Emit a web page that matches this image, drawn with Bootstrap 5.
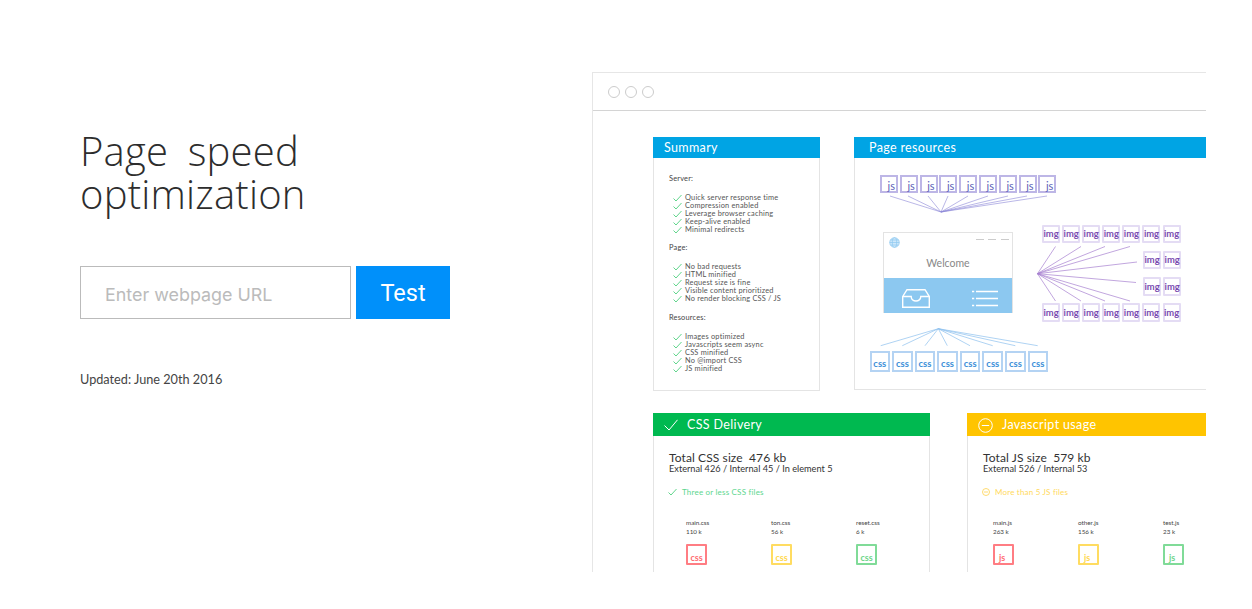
<!DOCTYPE html>
<html lang="en">
<head>
  <meta charset="UTF-8" />
  <title>Page speed optimization</title>
  <meta name="viewport" content="width=device-width, initial-scale=1" />
  <link href="https://cdn.jsdelivr.net/npm/bootstrap@5.3.3/dist/css/bootstrap.min.css" rel="stylesheet" />
  <style>
    body { background: #fff; font-family: Lato, "Open Sans", sans-serif; color: #333; min-height: 609px; overflow: hidden; }
    .intro { width: 592px; flex: none; padding: 129px 0 0 80px; }
    .intro h1 { font-family: "Open Sans", sans-serif; font-size: 40px; line-height: 43px; font-weight: 300; letter-spacing: .2px; word-spacing: 9px; color: #2d2d2d; margin: 0 0 51px; }
    .url-input { width: 271px; height: 53px; border: 1px solid #bbb; border-radius: 0; padding: 3px 24px 0; font-family: Inter, Roboto, sans-serif; font-size: 17.9px; box-shadow: none; }
    .url-input::placeholder { color: #bbb; opacity: 1; }
    .test-btn { width: 94px; height: 53px; margin-left: 1px; padding-top: 9px; background: #0090fa; border: 0; border-radius: 0; color: #fff; font-family: Roboto, sans-serif; font-size: 23.5px; }
    .updated { font-size: 12.7px; line-height: 16px; color: #444; margin-top: 52px; }

    .shot { width: 614px; height: 500px; flex: none; margin-top: 72px; border: solid #e6e6e6; border-width: 1.5px 0 0 1.5px; overflow: hidden; }
    .shot-bar { height: 38px; border-bottom: 1px solid #d4d4d4; padding-left: 15px; gap: 5px; }
    .shot-dot { width: 12px; height: 12px; border: 1px solid #ccc; border-radius: 50%; }
    .shot-main { padding: 26px 0 0 60px; }
    .shot-row { gap: 34px; }
    .shot-row + .shot-row { gap: 37px; margin-top: 22px; }
    .pane { flex: none; }
    .pane-summary { width: 167px; }
    .pane-res { width: 360px; }
    .pane-css { width: 277px; }
    .pane-js { width: 277px; }
    .pane-head { height: 21px; color: #fff; font-size: 12.5px; letter-spacing: .35px; padding: 1px 0 0 11px; gap: 9px; }
    .head-blue { background: #00a4e4; }
    .head-blue.pane-res-head { padding-left: 15px; }
    .head-green { background: #00b950; height: 23px; }
    .head-yellow { background: #ffc400; height: 23px; }
    .pane-body { border: 1px solid #e4e4e4; border-top: 0; }

    .sum-body { height: 233px; padding: 16.5px 0 0 15px; font-size: 7.4px; line-height: 8px; color: #555; letter-spacing: .2px; }
    .sum-label { margin-bottom: 11.2px; color: #444; }
    .sum-list { margin: 0 0 10.4px 4px; }
    .sum-list li { gap: 3px; }
    .tick { width: 9px; height: 8px; flex: none; }

    .map-body { height: 232px; }
    .map-lines { left: 0; top: 0; }
    .node-row { gap: 1.8px; }
    .node { width: 18px; height: 18.5px; font-size: 9px; font-weight: 700; display: flex; align-items: flex-end; justify-content: center; line-height: 11px; padding-bottom: 2px; }
    .node-js { border: 2px solid #bdb6e6; color: #5d5fb8; justify-content: flex-end; padding: 0 1px 0 0; font-weight: 400; font-size: 11px; }
    .node-img { border: 2px solid #e4dcf4; color: #7a4bb0; font-size: 9.4px; border-radius: 1px; align-items: center; padding: 0; }
    .node-css { width: 20.6px; height: 21px; border: 2px solid #b4d3f3; color: #3d8fd9; font-size: 9.5px; padding: 0 0 1px; }
    .js-row { left: 25px; top: 16.5px; }
    .img-row-a { left: 187px; top: 66.5px; gap: 2.1px; }
    .img-row-b { left: 288px; top: 92.5px; gap: 2.1px; }
    .img-row-c { left: 288px; top: 119px; gap: 2.1px; }
    .img-row-d { left: 187px; top: 145px; gap: 2.1px; }
    .css-row { left: 14.5px; top: 193px; gap: 2px; }

    .site-card { left: 28px; top: 74px; width: 130px; height: 81px; border: 1px solid #e3e3e3; }
    .site-top { height: 44.5px; }
    .site-name { font-size: 10.5px; color: #888; padding-top: 23px; }
    .site-globe { left: 4.5px; top: 4px; }
    .site-dashes { right: 3.5px; top: 5.5px; gap: 4.5px; }
    .site-dashes i { width: 8px; height: 1.5px; background: #ccc; }
    .site-foot { height: 35.5px; background: #8cc8f0; padding: 11px 14px 0 18px; }

    .deliv-body { height: 140px; padding: 15px 0 0 15px; }
    .total-line { font-size: 12px; line-height: 13px; color: #333; letter-spacing: .1px; }
    .total-sub { font-size: 9.2px; line-height: 9px; color: #333; }
    .rule-line { margin: 14px 0 0 -1px; font-size: 8px; line-height: 10px; gap: 5px; letter-spacing: .2px; }
    .rule-ok { color: #5cd68e; }
    .rule-warn { color: #ffd95c; }
    .file-row { margin: 21px 0 0 17px; }
    .file-row-js { margin-left: 10px; }
    .file-item { width: 85px; flex: none; font-size: 6.3px; line-height: 9px; color: #444; }
    .file-icon { width: 21px; height: 21px; margin-top: 8px; border: 2px solid; border-radius: 1px; font-size: 9px; font-weight: 700; line-height: 10px; }
    .file-red { color: #ff6b72; border-color: #ff7d83; }
    .file-amber { color: #ffd84d; border-color: #ffdc61; }
    .file-lime { color: #6ed68a; border-color: #80db98; }
  </style>
</head>
<body>
  <svg width="0" height="0" class="position-absolute">
    <defs>
      <symbol id="tick" viewBox="0 0 9 8"><path d="M.5 4.5 3 7 8.5 1" fill="none" stroke="#4fd07f" stroke-width=".9"/></symbol>
    </defs>
  </svg>

  <div class="d-flex">
    <!-- Left side -->
    <section class="intro">
      <h1>Page speed<br>optimization</h1>
      <form class="d-flex gap-1" onsubmit="return false">
        <input type="text" class="form-control url-input flex-none" placeholder="Enter webpage URL" />
        <button class="btn test-btn">Test</button>
      </form>
      <p class="updated">Updated: June 20th 2016</p>
    </section>

    <!-- Report illustration -->
    <section class="shot">
      <div class="shot-bar d-flex align-items-center">
        <span class="shot-dot"></span><span class="shot-dot"></span><span class="shot-dot"></span>
      </div>
      <div class="shot-main">
        <div class="shot-row d-flex">
          <div class="pane pane-summary">
            <div class="pane-head head-blue d-flex align-items-center">Summary</div>
            <div class="pane-body sum-body">
              <div class="sum-label">Server:</div>
              <ul class="list-unstyled sum-list">
                <li class="d-flex"><svg class="tick"><use href="#tick"/></svg>Quick server response time</li>
                <li class="d-flex"><svg class="tick"><use href="#tick"/></svg>Compression enabled</li>
                <li class="d-flex"><svg class="tick"><use href="#tick"/></svg>Leverage browser caching</li>
                <li class="d-flex"><svg class="tick"><use href="#tick"/></svg>Keep-alive enabled</li>
                <li class="d-flex"><svg class="tick"><use href="#tick"/></svg>Minimal redirects</li>
              </ul>
              <div class="sum-label">Page:</div>
              <ul class="list-unstyled sum-list">
                <li class="d-flex"><svg class="tick"><use href="#tick"/></svg>No bad requests</li>
                <li class="d-flex"><svg class="tick"><use href="#tick"/></svg>HTML minified</li>
                <li class="d-flex"><svg class="tick"><use href="#tick"/></svg>Request size is fine</li>
                <li class="d-flex"><svg class="tick"><use href="#tick"/></svg>Visible content prioritized</li>
                <li class="d-flex"><svg class="tick"><use href="#tick"/></svg>No render blocking CSS / JS</li>
              </ul>
              <div class="sum-label">Resources:</div>
              <ul class="list-unstyled sum-list">
                <li class="d-flex"><svg class="tick"><use href="#tick"/></svg>Images optimized</li>
                <li class="d-flex"><svg class="tick"><use href="#tick"/></svg>Javascripts seem async</li>
                <li class="d-flex"><svg class="tick"><use href="#tick"/></svg>CSS minified</li>
                <li class="d-flex"><svg class="tick"><use href="#tick"/></svg>No @import CSS</li>
                <li class="d-flex"><svg class="tick"><use href="#tick"/></svg>JS minified</li>
              </ul>
            </div>
          </div>

          <div class="pane pane-res">
            <div class="pane-head pane-res-head head-blue d-flex align-items-center">Page resources</div>
            <div class="pane-body map-body position-relative">
              <!-- viewBox uses the picture's own coordinates -->
              <svg class="map-lines position-absolute" width="358" height="232" viewBox="855 158 358 232" fill="none">
                <g stroke="#8b86d6" stroke-width=".6">
                  <path d="M890 196 941 212M908 196 941 212M928 196 941 212M948 196 941 212M968 196 941 212M988 196 941 212M1008 196 941 212M1027 196 941 212M1047 196 941 212"/>
                </g>
                <g stroke="#a67fd0" stroke-width=".7">
                  <path d="M1055.5 246.5 1037.5 273.7M1081 246.5 1037.5 273.7M1105 246.5 1037.5 273.7M1130 246.5 1037.5 273.7M1137 262 1037.5 273.7M1136 282.5 1037.5 273.7M1130 301 1037.5 273.7M1105 301 1037.5 273.7M1081 301 1037.5 273.7M1055.5 301 1037.5 273.7"/>
                </g>
                <g stroke="#8cc0ee" stroke-width=".7">
                  <path d="M880.7 345.7 938.3 328.7M902.3 345.7 938.3 328.7M925 345.7 938.3 328.7M947.3 345.7 938.3 328.7M970 345.7 938.3 328.7M992.7 345.7 938.3 328.7M1015.3 345.7 938.3 328.7M1037.7 345.7 938.3 328.7"/>
                </g>
              </svg>

              <div class="node-row js-row d-flex position-absolute">
                <span class="node node-js">js</span><span class="node node-js">js</span><span class="node node-js">js</span>
                <span class="node node-js">js</span><span class="node node-js">js</span><span class="node node-js">js</span>
                <span class="node node-js">js</span><span class="node node-js">js</span><span class="node node-js">js</span>
              </div>

              <div class="node-row img-row-a d-flex position-absolute">
                <span class="node node-img">img</span><span class="node node-img">img</span><span class="node node-img">img</span><span class="node node-img">img</span>
                <span class="node node-img">img</span><span class="node node-img">img</span><span class="node node-img">img</span>
              </div>
              <div class="node-row img-row-b d-flex position-absolute">
                <span class="node node-img">img</span><span class="node node-img">img</span>
              </div>
              <div class="node-row img-row-c d-flex position-absolute">
                <span class="node node-img">img</span><span class="node node-img">img</span>
              </div>
              <div class="node-row img-row-d d-flex position-absolute">
                <span class="node node-img">img</span><span class="node node-img">img</span><span class="node node-img">img</span><span class="node node-img">img</span>
                <span class="node node-img">img</span><span class="node node-img">img</span><span class="node node-img">img</span>
              </div>

              <div class="site-card position-absolute">
                <div class="site-top position-relative text-center">
                  <svg class="site-globe position-absolute" width="11" height="11" viewBox="0 0 11 11" fill="#cfe8fa" stroke="#8cc8f0" stroke-width=".7">
                    <circle cx="5.5" cy="5.5" r="4.8"/><ellipse cx="5.5" cy="5.5" rx="2.2" ry="4.8"/><path d="M.7 5.5h9.6M1.4 3h8.2M1.4 8h8.2"/>
                  </svg>
                  <div class="site-dashes d-flex position-absolute"><i></i><i></i><i></i></div>
                  <div class="site-name">Welcome</div>
                </div>
                <div class="site-foot d-flex justify-content-between">
                  <svg width="28" height="19" viewBox="0 0 28 19" fill="none" stroke="#fff" stroke-width="1.4">
                    <path d="M.7 7.5 5 .7h18l4.3 6.8v10.8H.7zM.7 7.5h8.5c0 6 9.6 6 9.6 0h8.5"/>
                  </svg>
                  <svg width="26" height="18" viewBox="0 0 26 18" fill="none" stroke="#fff" stroke-width="1.4">
                    <path d="M4 2.5h22M4 9.5h22M4 16.5h22M0 2.5h2.2M0 9.5h2.2M0 16.5h2.2"/>
                  </svg>
                </div>
              </div>

              <div class="node-row css-row d-flex position-absolute">
                <span class="node node-css">css</span><span class="node node-css">css</span><span class="node node-css">css</span><span class="node node-css">css</span>
                <span class="node node-css">css</span><span class="node node-css">css</span><span class="node node-css">css</span><span class="node node-css">css</span>
              </div>
            </div>
          </div>
        </div>

        <div class="shot-row d-flex">
          <div class="pane pane-css">
            <div class="pane-head head-green d-flex align-items-center">
              <svg width="14" height="12" viewBox="0 0 14 12" fill="none" stroke="#fff" stroke-width="1"><path d="M.5 6.5 5 11 13.5 .8"/></svg>
              CSS Delivery
            </div>
            <div class="pane-body deliv-body">
              <div class="total-line">Total CSS size&nbsp; 476 kb</div>
              <div class="total-sub">External 426 / Internal 45 / In element 5</div>
              <div class="rule-line rule-ok d-flex align-items-center"><svg class="tick"><use href="#tick"/></svg>Three or less CSS files</div>
              <div class="file-row d-flex">
                <div class="file-item">main.css<br>110 k<div class="file-icon file-red d-flex align-items-end justify-content-center">css</div></div>
                <div class="file-item">ton.css<br>56 k<div class="file-icon file-amber d-flex align-items-end justify-content-center">css</div></div>
                <div class="file-item">reset.css<br>6 k<div class="file-icon file-lime d-flex align-items-end justify-content-center">css</div></div>
              </div>
            </div>
          </div>

          <div class="pane pane-js">
            <div class="pane-head head-yellow d-flex align-items-center">
              <svg width="15" height="15" viewBox="0 0 15 15" fill="none" stroke="#fff" stroke-width="1"><circle cx="7.5" cy="7.5" r="6.8"/><path d="M3.8 7.5h7.4"/></svg>
              Javascript usage
            </div>
            <div class="pane-body deliv-body">
              <div class="total-line">Total JS size&nbsp; 579 kb</div>
              <div class="total-sub">External 526 / Internal 53</div>
              <div class="rule-line rule-warn d-flex align-items-center">
                <svg width="8" height="8" viewBox="0 0 8 8" fill="none" stroke="#ffd24d" stroke-width=".8"><circle cx="4" cy="4" r="3.5"/><path d="M2 4h4"/></svg>
                More than 5 JS files
              </div>
              <div class="file-row d-flex file-row-js">
                <div class="file-item">main.js<br>263 k<div class="file-icon file-red d-flex align-items-end ps-1">js</div></div>
                <div class="file-item">other.js<br>156 k<div class="file-icon file-amber d-flex align-items-end ps-1">js</div></div>
                <div class="file-item">test.js<br>23 k<div class="file-icon file-lime d-flex align-items-end ps-1">js</div></div>
              </div>
            </div>
          </div>
        </div>
      </div>
    </section>
  </div>

  <script src="https://cdn.jsdelivr.net/npm/bootstrap@5.3.3/dist/js/bootstrap.bundle.min.js"></script>
</body>
</html>
